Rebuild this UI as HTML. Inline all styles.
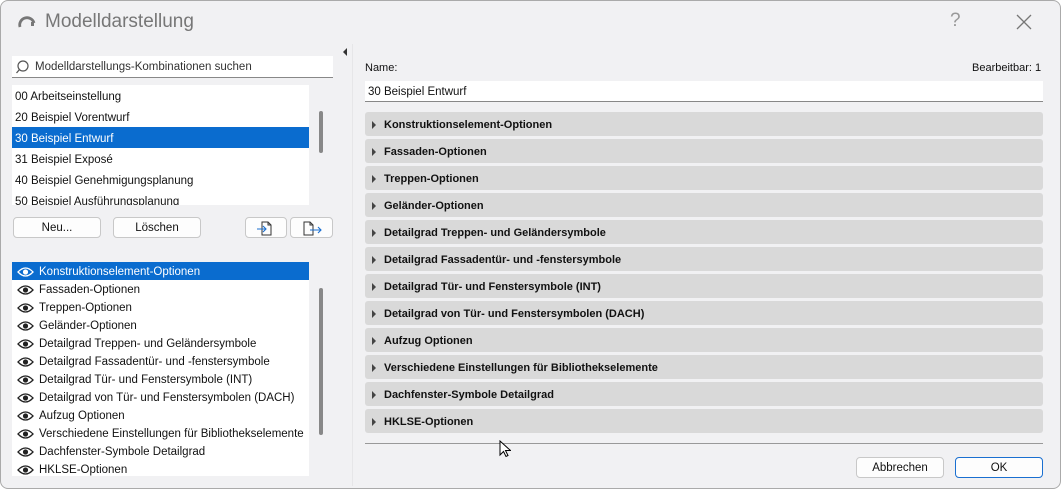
<!DOCTYPE html><html><head><style>
body{margin:0;width:1062px;height:490px;background:#fff;font-family:"Liberation Sans",sans-serif;font-size:11.5px;color:#111;overflow:hidden;position:relative}
.win{position:absolute;left:0;top:0;width:1059px;height:487px;background:#f1f1f3;border:1px solid #aaa;border-radius:8px}
.a{position:absolute}
.list{background:#fff}
.row{height:21px;line-height:24px;padding-left:3px;white-space:nowrap}
.sel{background:#0a6ccf;color:#fff}
.row2{height:18px;line-height:18px;padding-left:5px;white-space:nowrap;display:flex;align-items:center;padding-top:1px;box-sizing:border-box}
.eye{width:17px;height:10px;margin-right:5px}
.btn{position:absolute;background:#fdfdfd;border:1px solid #c8c8c8;border-radius:4px;text-align:center;line-height:21px;box-sizing:border-box;height:21px}
.sec{position:absolute;left:365px;width:678px;height:24px;background:#d9d9d9;border-radius:3px;font-weight:bold;font-size:11px;line-height:26px}
.sec:before{content:"";position:absolute;left:7px;top:9px;border-left:4px solid #444;border-top:4px solid transparent;border-bottom:4px solid transparent}
.sec span{position:absolute;left:19px}
.thumb{position:absolute;width:4px;background:#888;border-radius:2px}
</style></head><body><div class="win"></div>
<svg class="a" style="left:17px;top:11px" width="20" height="18"><path d="M3 16 A7 7 0 0 1 17 12" fill="none" stroke="#777" stroke-width="2.8"/><rect x="14" y="11" width="3" height="4" fill="#777"/></svg>
<div class="a" style="left:45px;top:11px;font-size:19px;color:#777">Modelldarstellung</div>
<div class="a" style="left:950px;top:10px;font-size:19px;color:#999">?</div>
<svg class="a" style="left:1016px;top:14px" width="16" height="16"><path d="M1 1L15 15M15 1L1 15" stroke="#777" stroke-width="1.3"/></svg>
<div class="a" style="left:12px;top:56px;width:321px;height:21px;background:#fff;border-bottom:1px solid #888"></div>
<svg class="a" style="left:15px;top:59px" width="16" height="16"><circle cx="8" cy="7" r="5" fill="none" stroke="#555" stroke-width="1.2"/><path d="M4.5 10.5L1.5 14" stroke="#555" stroke-width="1.3"/></svg>
<div class="a" style="left:35px;top:61px;color:#333">Modelldarstellungs-Kombinationen suchen</div>
<div class="a list" style="left:12px;top:85px;width:297px;height:120px;overflow:hidden">
<div class="row">00 Arbeitseinstellung</div><div class="row">20 Beispiel Vorentwurf</div><div class="row sel">30 Beispiel Entwurf</div><div class="row">31 Beispiel Exposé</div><div class="row">40 Beispiel Genehmigungsplanung</div><div class="row">50 Beispiel Ausführungsplanung</div></div>
<div class="thumb" style="left:319px;top:111px;height:42px"></div>
<div class="btn" style="left:13px;top:217px;width:88px">Neu...</div>
<div class="btn" style="left:113px;top:217px;width:88px">Löschen</div>
<div class="btn" style="left:245px;top:217px;width:42px"><svg width="20" height="17" style="margin-top:1px"><path d="M6 3h6l3 3v10H6z M12 3v3h3" fill="none" stroke="#333"/><path d="M1 10h9M7 7l3 3-3 3" fill="none" stroke="#1a6fd0" stroke-width="1.1"/></svg></div>
<div class="btn" style="left:290px;top:217px;width:43px"><svg width="22" height="17" style="margin-top:1px"><path d="M3 3h6l3 3v10H3z M9 3v3h3" fill="none" stroke="#333"/><path d="M9 11h11M17 8l3 3-3 3" fill="none" stroke="#1a6fd0" stroke-width="1.1"/></svg></div>
<div class="a list" style="left:12px;top:262px;width:297px;height:214px;overflow:hidden" id="l2"></div>
<div class="thumb" style="left:319px;top:288px;height:147px"></div>
<div class="a" style="left:343px;top:48px;border-right:4px solid #333;border-top:4px solid transparent;border-bottom:4px solid transparent"></div>
<div class="a" style="left:352px;top:44px;width:1px;height:442px;background:#e6e6e8"></div>
<div class="a" style="left:365px;top:62px;font-size:11px">Name:</div>
<div class="a" style="left:972px;top:62px;font-size:11px">Bearbeitbar: 1</div>
<div class="a" style="left:365px;top:81px;width:678px;height:20px;background:#fff;border-bottom:1px solid #888;line-height:22px"><span style="padding-left:3px">30 Beispiel Entwurf</span></div>
<div id="secs"></div>
<div class="a" style="left:365px;top:443px;width:678px;height:1px;background:#999"></div>
<div class="btn" style="left:856px;top:457px;width:88px">Abbrechen</div>
<div class="btn" style="left:955px;top:457px;width:88px;border-color:#1a6fd0">OK</div>
<svg class="a" style="left:499px;top:440px" width="12" height="18"><path d="M1 1v14l3.5-3.5 2.5 5 2-1-2.5-5h5z" fill="#fff" stroke="#000"/></svg>
<script>
var n=["Konstruktionselement-Optionen","Fassaden-Optionen","Treppen-Optionen","Geländer-Optionen","Detailgrad Treppen- und Geländersymbole","Detailgrad Fassadentür- und -fenstersymbole","Detailgrad Tür- und Fenstersymbole (INT)","Detailgrad von Tür- und Fenstersymbolen (DACH)","Aufzug Optionen","Verschiedene Einstellungen für Bibliothekselemente","Dachfenster-Symbole Detailgrad","HKLSE-Optionen"];
var eye='<svg class="eye" viewBox="0 0 17 10"><path d="M1 5Q8.5-3 16 5Q8.5 13 1 5z" fill="none" stroke="C" stroke-width="1.3"/><circle cx="8.5" cy="5" r="2.6" fill="C"/></svg>';
var h="",s="";n.forEach(function(t,i){h+='<div class="row2'+(i?'':' sel')+'">'+eye.replace(/C/g,i?'#222':'#fff')+t+'</div>';s+='<div class="sec" style="top:'+(112+i*27)+'px"><span>'+t+'</span></div>';});
document.getElementById("l2").innerHTML=h;document.getElementById("secs").innerHTML=s;
</script></body></html>
